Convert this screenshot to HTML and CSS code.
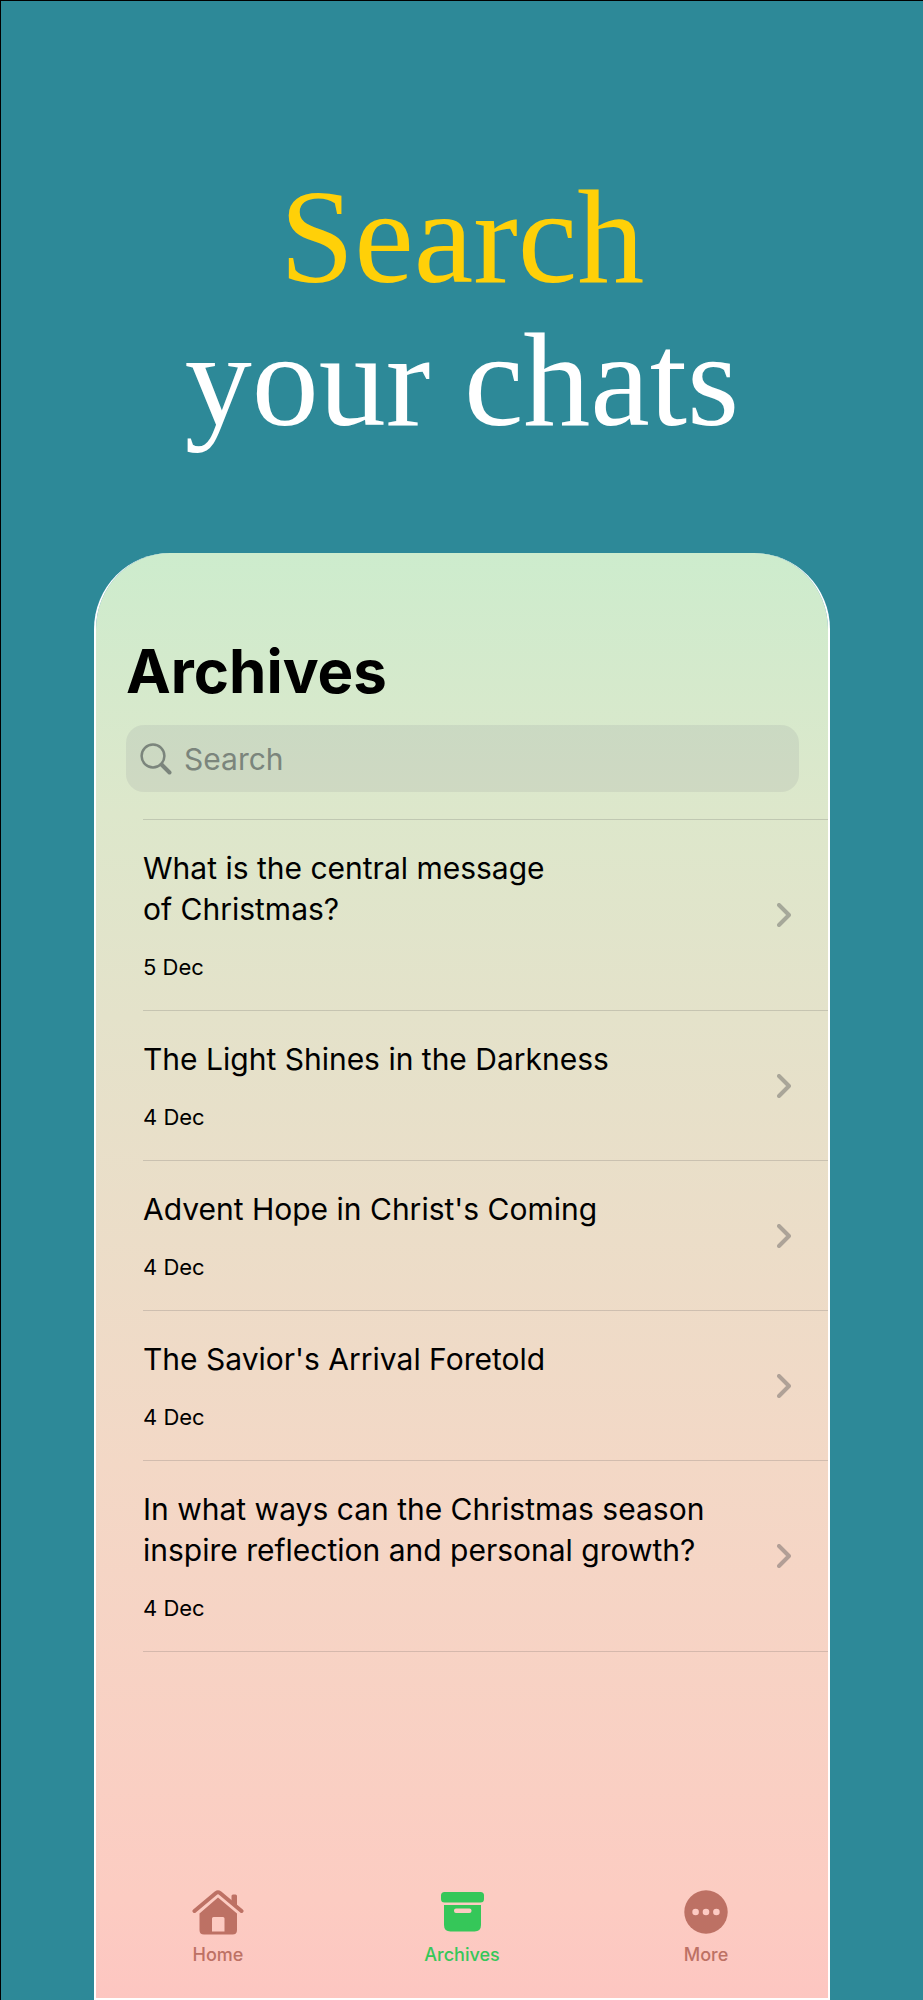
FILE: index.html
```html
<!DOCTYPE html>
<html lang="en">
<head>
    <meta charset="utf-8">
    <title>Search your chats</title>
    <link rel="stylesheet" href="styles.css">
</head>

<body>
    <h1 class="headline"><span>Search</span><br>your chats</h1>

    <div class="phone">
        <main class="content">
            <h2>Archives</h2>
            <label class="search">
                <svg width="32" height="32" viewBox="0 0 32 32" aria-hidden="true">
                    <circle cx="13" cy="13" r="11.4" />
                    <path class="handle" d="M21.5 21.5L29.5 29.5" />
                </svg>
                <input type="search" placeholder="Search" aria-label="Search">
            </label>
        </main>

        <ul class="chats">
            <li>
                <a href="#">
                    <div>
                        <p class="name">What is the central message<br>of Christmas?</p>
                        <p class="date">5 Dec</p>
                    </div>
                    <svg class="arrow" width="14" height="24" viewBox="0 0 14 24"><path d="M2 2L12 12L2 22" /></svg>
                </a>
            </li>
            <li>
                <a href="#">
                    <div>
                        <p class="name">The Light Shines in the Darkness</p>
                        <p class="date">4 Dec</p>
                    </div>
                    <svg class="arrow" width="14" height="24" viewBox="0 0 14 24"><path d="M2 2L12 12L2 22" /></svg>
                </a>
            </li>
            <li>
                <a href="#">
                    <div>
                        <p class="name">Advent Hope in Christ's Coming</p>
                        <p class="date">4 Dec</p>
                    </div>
                    <svg class="arrow" width="14" height="24" viewBox="0 0 14 24"><path d="M2 2L12 12L2 22" /></svg>
                </a>
            </li>
            <li>
                <a href="#">
                    <div>
                        <p class="name">The Savior's Arrival Foretold</p>
                        <p class="date">4 Dec</p>
                    </div>
                    <svg class="arrow" width="14" height="24" viewBox="0 0 14 24"><path d="M2 2L12 12L2 22" /></svg>
                </a>
            </li>
            <li>
                <a href="#">
                    <div>
                        <p class="name">In what ways can the Christmas season<br>inspire reflection and personal growth?</p>
                        <p class="date">4 Dec</p>
                    </div>
                    <svg class="arrow" width="14" height="24" viewBox="0 0 14 24"><path d="M2 2L12 12L2 22" /></svg>
                </a>
            </li>
        </ul>

        <nav class="tabs">
            <a href="#">
                <svg width="52" height="48" viewBox="0 0 52 48">
                    <path fill="none" stroke="currentColor" stroke-width="4" stroke-linecap="round" stroke-linejoin="round" d="M2.5 24L24 6Q26 4.500 28 6L49.500 24" />
                    <path d="M39.500 9Q39.500 7.500 41 7.500H43.500Q45 7.500 45 9V20L39.500 15.500Z" />
                    <path fill-rule="evenodd" d="M26 10.500L45 26.500V43Q45 47.500 40.500 47.500H12Q7.500 47.500 7.500 43V26.500ZM21.500 30Q20 30 20 31.500V44.500H32.500V31.500Q32.500 30 31 30Z" />
                </svg>
                Home
            </a>
            <a href="#" class="current">
                <svg width="52" height="48" viewBox="0 0 52 48">
                    <rect x="5" y="5" width="43" height="10.500" rx="3.500" />
                    <path fill-rule="evenodd" d="M8 18H45V38Q45 44.500 38.500 44.500H14.500Q8 44.500 8 38ZM20 21.500Q18 21.500 18 23.500V24Q18 26 20 26H33.500Q35.500 26 35.500 24V23.500Q35.500 21.500 33.500 21.500Z" />
                </svg>
                Archives
            </a>
            <a href="#">
                <svg width="52" height="48" viewBox="0 0 52 48">
                    <circle cx="26" cy="25" r="21.700" />
                    <g fill="#fdcbc3">
                        <circle cx="15.600" cy="25" r="3.300" />
                        <circle cx="26" cy="25" r="3.300" />
                        <circle cx="36.400" cy="25" r="3.300" />
                    </g>
                </svg>
                More
            </a>
        </nav>
    </div>
</body>

</html>
```
FILE: styles.css
```css
* {
    box-sizing: border-box;
    margin: 0;
    padding: 0;
}

body {
    display: flex;
    flex-direction: column;
    min-height: 100vh;
    border-top: 1px solid #000;
    border-left: 1px solid #000;
    background-color: #2d8998;
    font-family: Inter, "Liberation Sans", sans-serif;
    color: #000;
}

.headline {
    padding: 165px 0 101px;
    font: 134px/143px "Liberation Serif", serif;
    text-align: center;
    color: #fff;
}

.headline span {
    color: #ffd008;
}

.phone {
    flex: 1;
    display: flex;
    flex-direction: column;
    margin: 0 93px;
    border: 2px solid #fff;
    border-top: 0;
    border-radius: 76px 76px 0 0;
    background: linear-gradient(#cdeccd, #dde7cb 18%, #e4e2ca 32%, #f3d8c6 63%, #fcccc2 93%, #fdc6c1) border-box;
    background-clip: padding-box;
}

.content {
    padding: 78px 29px 27px 30px;
}

h2 {
    margin-bottom: 14px;
    font-size: 60px;
    line-height: 80px;
}

.search {
    display: flex;
    align-items: center;
    gap: 12px;
    height: 67px;
    padding: 0 14px;
    border-radius: 18px;
    background-color: rgba(118, 118, 128, .12);
}

.search svg {
    fill: none;
    stroke: #7b857c;
    stroke-width: 2.5;
    stroke-linecap: round;
}

.search .handle {
    stroke-width: 4;
}

.search input {
    flex: 1;
    min-width: 0;
    border: 0;
    outline: 0;
    background: none;
    font: 30px Inter, sans-serif;
    color: #000;
}

.search input::placeholder {
    color: #7b857c;
}

.chats {
    margin-left: 47px;
    border-top: 1px solid rgba(60, 60, 67, .18);
    list-style: none;
}

.chats li {
    border-bottom: 1px solid rgba(60, 60, 67, .18);
}

.chats a {
    display: flex;
    align-items: center;
    justify-content: space-between;
    padding: 28px 37px 28px 0;
    color: #000;
    text-decoration: none;
}

.name {
    font-size: 30px;
    line-height: 41px;
}

.date {
    margin-top: 22px;
    font-size: 22px;
    line-height: 30px;
}

.arrow {
    fill: none;
    stroke: rgba(60, 60, 67, .36);
    stroke-width: 4;
    stroke-linecap: round;
    stroke-linejoin: round;
}

.tabs {
    display: flex;
    margin-top: auto;
    padding-bottom: 31px;
}

.tabs a {
    flex: 1;
    display: flex;
    flex-direction: column;
    align-items: center;
    gap: 8px;
    font-size: 18px;
    font-weight: 500;
    line-height: 24px;
    color: #bd7164;
    text-decoration: none;
}

.tabs svg {
    fill: currentColor;
}

.tabs .current {
    color: #35c759;
}
```
